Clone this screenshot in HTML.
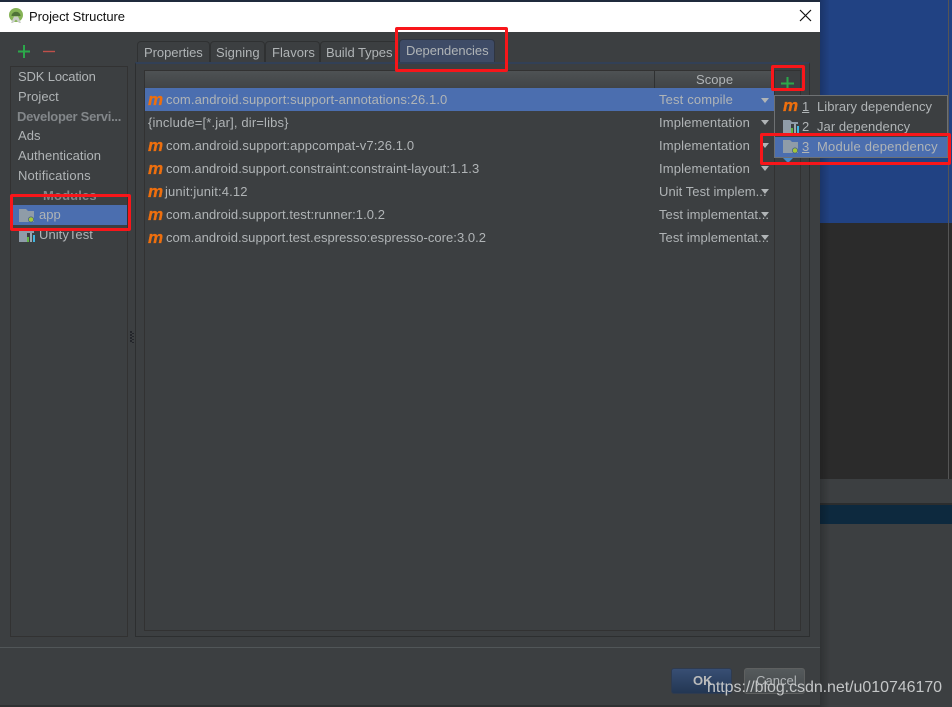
<!DOCTYPE html>
<html><head><meta charset="utf-8">
<style>
html,body{margin:0;padding:0}
body{width:952px;height:707px;overflow:hidden;position:relative;background:#3c3f41;font-family:"Liberation Sans",sans-serif;}
.a{position:absolute;box-sizing:border-box}
.t{position:absolute;white-space:nowrap;font-size:13px;line-height:16px;color:#b0b4b6;letter-spacing:.05px}
.s{letter-spacing:.15px}
.r{position:absolute;box-sizing:border-box;border:3px solid #f8161a;border-radius:2px}
.tab{position:absolute;box-sizing:border-box;top:41px;height:21px;border:1px solid #2f3132;border-bottom:0;border-radius:4px 4px 0 0;background:#3c3f41}
.m{position:absolute;font:italic bold 17px/16px "Liberation Sans",sans-serif;color:#ee6f0e;letter-spacing:0;-webkit-text-stroke:.3px #ee6f0e}
.arr{position:absolute;width:0;height:0;border-left:4px solid transparent;border-right:4px solid transparent;border-top:5px solid #b0b4b6}
</style></head><body>
<!-- background app -->
<div class="a" style="left:0;top:0;width:952px;height:2px;background:#1f2a3c"></div>
<div class="a" style="left:820px;top:0;width:132px;height:223px;background:#214283"></div>
<div class="a" style="left:820px;top:223px;width:132px;height:256px;background:#2b2b2b"></div>
<div class="a" style="left:948px;top:0;width:1px;height:479px;background:#555"></div>
<div class="a" style="left:820px;top:479px;width:132px;height:24px;background:#3c3f41"></div>
<div class="a" style="left:820px;top:503px;width:132px;height:2px;background:#2b2d2e"></div>
<div class="a" style="left:820px;top:505px;width:132px;height:19px;background:#0d293e"></div>
<div class="a" style="left:820px;top:524px;width:132px;height:183px;background:#3c3f41"></div>
<div class="a" style="left:820px;top:0;width:10px;height:707px;background:linear-gradient(90deg,rgba(0,0,0,.2),rgba(0,0,0,0))"></div>

<!-- dialog -->
<div class="a" style="left:0;top:32px;width:820px;height:674px;background:#3c3f41"></div>
<div class="a" style="left:0;top:2px;width:820px;height:30px;background:#fff"></div>
<div class="a" style="left:0;top:705px;width:820px;height:2px;background:#2f3132"></div>
<svg class="a" style="left:9px;top:8px" width="14" height="16" viewBox="0 0 14 16"><circle cx="7" cy="7" r="7" fill="#86b356"/><path d="M2.500 8a4.500 4.200 0 0 1 9 0z" fill="#4f7238"/><path d="M2 15 5 8.500h4L12 15h-2L7 11.500 4 15z" fill="#c9cdc8"/></svg>
<div class="t" style="left:29px;top:9px;color:#111;letter-spacing:-.05px">Project Structure</div>
<svg class="a" style="left:799px;top:9px" width="13" height="13"><path d="M1 1 12 12M12 1 1 12" stroke="#111" stroke-width="1.2" fill="none"/></svg>

<!-- left plus / minus -->
<svg class="a" style="left:17px;top:45px" width="40" height="14"><path d="M7 0v13M1 6.500h12" stroke="#2ba84a" stroke-width="2"/><path d="M26 6.500h12" stroke="#c0504a" stroke-width="1.400"/></svg>

<!-- left list -->
<div class="a" style="left:10px;top:66px;width:118px;height:571px;border:1px solid #323232"></div>
<div class="t" style="left:18px;top:69px;letter-spacing:-.15px">SDK Location</div>
<div class="t" style="left:18px;top:89px">Project</div>
<div class="t" style="left:17px;top:109px;font-weight:bold;color:#83878a;letter-spacing:-.28px">Developer Servi...</div>
<div class="t" style="left:18px;top:128px">Ads</div>
<div class="t" style="left:18px;top:148px">Authentication</div>
<div class="t s" style="left:18px;top:168px">Notifications</div>
<div class="t s" style="left:43px;top:188px;font-weight:bold;color:#83878a">Modules</div>
<div class="a" style="left:11px;top:205px;width:116px;height:20px;background:#4b6eaf"></div>
<svg class="a" style="left:19px;top:209px" width="16" height="14"><path d="M0 0h7l2 2h6v11H0z" fill="#8f9ca8"/><circle cx="12" cy="10.500" r="3" fill="#3c5a8a"/><circle cx="12" cy="10.500" r="2.300" fill="#a4c639"/></svg>
<div class="t" style="left:39px;top:207px">app</div>
<svg class="a" style="left:19px;top:229px" width="16" height="14"><path d="M0 0h7l2 2h6v2H8v9H0z" fill="#8f9ca8"/><rect x="8" y="8" width="2" height="5" fill="#62b543"/><rect x="11" y="4" width="2" height="9" fill="#9aa7b0"/><rect x="14" y="6" width="2" height="7" fill="#40b6e0"/></svg>
<div class="t" style="left:39px;top:227px">UnityTest</div>

<!-- splitter -->
<svg class="a" style="left:129px;top:331px" width="6" height="14"><g fill="#23252a"><rect x="1" y="0" width="2" height="2"/><rect x="3" y="2" width="2" height="1"/><rect x="1" y="3" width="2" height="2"/><rect x="3" y="5" width="2" height="1"/><rect x="1" y="6" width="2" height="2"/><rect x="3" y="8" width="2" height="1"/><rect x="1" y="9" width="2" height="2"/><rect x="3" y="11" width="2" height="1"/></g></svg>

<!-- tabs -->
<div class="tab" style="left:137px;width:73px"></div>
<div class="t" style="left:144px;top:45px;letter-spacing:-.05px">Properties</div>
<div class="tab" style="left:210px;width:55px"></div>
<div class="t" style="left:216px;top:45px">Signing</div>
<div class="tab" style="left:265px;width:55px"></div>
<div class="t" style="left:272px;top:45px">Flavors</div>
<div class="tab" style="left:320px;width:78px"></div>
<div class="t" style="left:326px;top:45px;letter-spacing:-.05px">Build Types</div>
<div class="tab" style="left:399px;top:39px;width:96px;height:24px;background:#3e4b66;border-color:#2f3540"></div>
<div class="t" style="left:406px;top:43px;letter-spacing:-.05px">Dependencies</div>

<!-- tab panel -->
<div class="a" style="left:135px;top:62px;width:675px;height:575px;border:1px solid #2d2f30;border-top:2px solid #324056"></div>
<div class="a" style="left:144px;top:70px;width:657px;height:561px;border:1px solid #323232"></div>
<div class="a" style="left:145px;top:71px;width:629px;height:17px;background:linear-gradient(#4e5254,#414446)"></div>
<div class="a" style="left:654px;top:71px;width:1px;height:17px;background:#2f3132"></div>
<div class="t" style="left:696px;top:72px">Scope</div>
<div class="a" style="left:774px;top:71px;width:1px;height:560px;background:#323232"></div>
<svg class="a" style="left:781px;top:77px" width="13" height="13"><path d="M6.500 0v13M0 6.500h13" stroke="#2ba84a" stroke-width="2"/></svg>

<!-- rows -->
<div class="a" style="left:145px;top:88px;width:629px;height:23px;background:#4b6eaf"></div>
<div class="m" style="left:148px;top:92px">m</div><div class="t" style="left:166px;top:92px;letter-spacing:.1px">com.android.support:support-annotations:26.1.0</div>
<div class="t s" style="left:148px;top:115px">{include=[*.jar], dir=libs}</div>
<div class="m" style="left:148px;top:138px">m</div><div class="t" style="left:166px;top:138px;letter-spacing:.1px">com.android.support:appcompat-v7:26.1.0</div>
<div class="m" style="left:148px;top:161px">m</div><div class="t" style="left:166px;top:161px;letter-spacing:.06px">com.android.support.constraint:constraint-layout:1.1.3</div>
<div class="m" style="left:148px;top:184px">m</div><div class="t s" style="left:165px;top:184px">junit:junit:4.12</div>
<div class="m" style="left:148px;top:207px">m</div><div class="t" style="left:166px;top:207px;letter-spacing:.06px">com.android.support.test:runner:1.0.2</div>
<div class="m" style="left:148px;top:230px">m</div><div class="t" style="left:166px;top:230px;letter-spacing:.04px">com.android.support.test.espresso:espresso-core:3.0.2</div>

<div class="t s" style="left:659px;top:92px">Test compile</div><div class="arr" style="left:761px;top:98px"></div>
<div class="t s" style="left:659px;top:115px">Implementation</div><div class="arr" style="left:761px;top:120px"></div>
<div class="t s" style="left:659px;top:138px">Implementation</div><div class="arr" style="left:761px;top:143px"></div>
<div class="t s" style="left:659px;top:161px">Implementation</div><div class="arr" style="left:761px;top:166px"></div>
<div class="t" style="left:659px;top:184px">Unit Test implem...</div><div class="arr" style="left:761px;top:189px"></div>
<div class="t" style="left:659px;top:207px">Test implementat...</div><div class="arr" style="left:761px;top:212px"></div>
<div class="t" style="left:659px;top:230px">Test implementat...</div><div class="arr" style="left:761px;top:235px"></div>

<!-- popup -->
<div class="a" style="left:774px;top:95px;width:174px;height:63px;background:#3c3f41;border:1px solid #6e7173"></div>
<div class="a" style="left:775px;top:137px;width:172px;height:20px;background:#4b6eaf"></div>
<div class="m" style="left:783px;top:98px">m</div>
<div class="t" style="left:802px;top:99px;text-decoration:underline">1</div>
<div class="t" style="left:817px;top:99px">Library dependency</div>
<svg class="a" style="left:783px;top:120px" width="16" height="14"><path d="M0 0h7l2 2h6v2H8v9H0z" fill="#8f9ca8"/><rect x="8" y="8" width="2" height="5" fill="#62b543"/><rect x="11" y="4" width="2" height="9" fill="#9aa7b0"/><rect x="14" y="6" width="2" height="7" fill="#40b6e0"/></svg>
<div class="t" style="left:802px;top:119px">2</div>
<div class="t" style="left:817px;top:119px">Jar dependency</div>
<svg class="a" style="left:783px;top:140px" width="16" height="14"><path d="M0 0h7l2 2h6v11H0z" fill="#8f9ca8"/><circle cx="12" cy="10.500" r="3" fill="#3c5a8a"/><circle cx="12" cy="10.500" r="2.300" fill="#a4c639"/></svg>
<div class="t" style="left:802px;top:139px;text-decoration:underline">3</div>
<div class="t" style="left:817px;top:139px;letter-spacing:.22px">Module dependency</div>
<div class="a" style="left:783px;top:158px;width:0;height:0;border-left:5px solid transparent;border-right:5px solid transparent;border-top:5px solid #4a88c7"></div>

<!-- footer -->
<div class="a" style="left:0;top:647px;width:820px;height:1px;background:#515658"></div>
<div class="a" style="left:671px;top:668px;width:61px;height:26px;border:1px solid #2f3b4f;border-radius:3px;background:linear-gradient(#384f74,#233753)"></div>
<div class="t" style="left:693px;top:673px;font-weight:bold;color:#bbb">OK</div>
<div class="a" style="left:744px;top:668px;width:61px;height:26px;border:1px solid #5e6060;border-radius:3px;background:linear-gradient(#555a5c,#45494b)"></div>
<div class="t" style="left:756px;top:673px">Cancel</div>

<!-- highlight rectangles -->
<div class="r" style="left:395px;top:27px;width:113px;height:45px"></div>
<div class="r" style="left:771px;top:65px;width:34px;height:26px"></div>
<div class="r" style="left:760px;top:133px;width:191px;height:32px"></div>
<div class="r" style="left:10px;top:194px;width:121px;height:37px"></div>

<!-- watermark -->
<div class="t" style="left:707px;top:678px;font-size:16px;line-height:20px;color:#c4c6c7;letter-spacing:-.05px">https://blog.csdn.net/u010746170</div>
</body></html>
